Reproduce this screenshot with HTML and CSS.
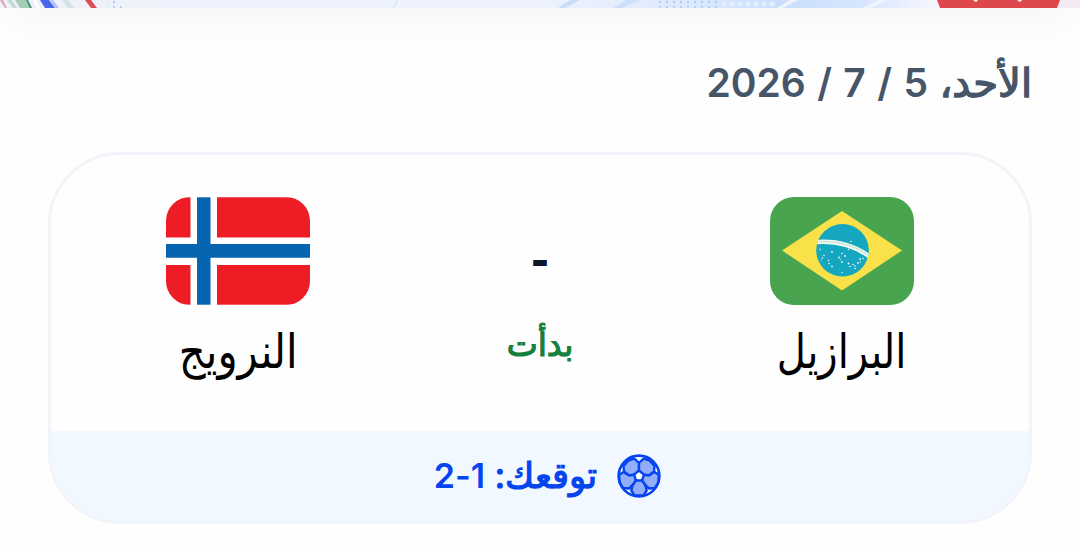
FILE: index.html
```
<!DOCTYPE html>
<html lang="ar" dir="rtl">
<head>
    <meta charset="UTF-8">
    <meta name="viewport" content="width=device-width, initial-scale=1.0">
    <title>المباريات</title>
    <link rel="stylesheet" href="styles.css">
</head>
<body>
    <!-- Banner -->
    <header class="banner">
        <svg class="banner-art" viewBox="0 0 1080 8" preserveAspectRatio="none">
            <defs>
                <linearGradient id="sky">
                    <stop offset="0" stop-color="#eef1fa"/>
                    <stop offset="0.5" stop-color="#eef3fd"/>
                    <stop offset="0.64" stop-color="#dce9fd"/>
                    <stop offset="0.72" stop-color="#c9defc"/>
                    <stop offset="0.8" stop-color="#d7e6fd"/>
                    <stop offset="0.86" stop-color="#f4f6fd"/>
                    <stop offset="1" stop-color="#f3eaf2"/>
                </linearGradient>
                <pattern id="dots" width="7" height="5" patternUnits="userSpaceOnUse">
                    <circle cx="2" cy="2" r="1.2" fill="#b6cdf0"/>
                </pattern>
                <pattern id="lightDots" width="8" height="7" patternUnits="userSpaceOnUse">
                    <circle cx="4" cy="4" r="2.6" fill="#e3eefe"/>
                </pattern>
            </defs>
            <rect width="1080" height="8" fill="url(#sky)"/>
            <path d="M0 0h3l4 8H5z" fill="#e5a9ad"/>
            <path d="M7 0h5l5 8h-4z" fill="#c3dccf"/>
            <path d="M15 0h11l5 8H20z" fill="#a3ccb8"/>
            <path d="M26 0h2l4 8h-2z" fill="#3f9269"/>
            <path d="M33 0h3l4 8h-3z" fill="#fff"/>
            <path d="M40 0h9l6 8H45z" fill="#4a67ea"/>
            <path d="M50 0h3l6 8h-4z" fill="#b5c2f5"/>
            <path d="M62 0h6l7 8h-7z" fill="#d5e3e6"/>
            <path d="M85 0h6l6 8h-6z" fill="#e04c56"/>
            <path d="M106 0h10l7 8h-10z" fill="url(#dots)"/>
            <path d="M397 0h1l-4 8h-1z" fill="#cfdcf2"/>
            <path d="M570 0h10l-15 8h-7z" fill="#c9ddf9"/>
            <path d="M626 0h14l-17 8h-10z" fill="#cddffa"/>
            <path d="M655 0h65v8h-65z" fill="url(#dots)"/>
            <path d="M720 0h55v8h-55z" fill="url(#lightDots)"/>
            <path d="M790 0h8l-15 8h-6zM880 0h8l-18 8h-8z" fill="#eff5fe"/>
            <path d="M937 0h123l-3 8H940z" fill="#de474c"/>
            <path d="M973 0h5l-2 2zM1017 0h5l-2 2z" fill="#fff"/>
        </svg>
    </header>

    <main class="content">
        <h1 class="date"><span class="day">الأحد،</span> 5 / 7 / 2026</h1>

        <!-- Match card -->
        <section class="match-card">
            <div class="match">
                <div class="team">
                    <svg class="flag" viewBox="0 0 144 108">
                        <clipPath id="globe"><circle cx="72.5" cy="53.3" r="26.3"/></clipPath>
                        <rect width="144" height="108" fill="#48a44f"/>
                        <path d="M12 53.5 72 14l60 39.5L72 93.5z" fill="#f8e149"/>
                        <circle cx="72.5" cy="53.3" r="26.3" fill="#15a6c0"/>
                        <g clip-path="url(#globe)">
                            <path d="M44 45.3Q76 42 101 60.5" fill="none" stroke="#f4fbf5" stroke-width="4.4"/>
                            <path d="M49 44.8Q76 43 97 57.5" fill="none" stroke="#a6d0b6" stroke-width="1.5" stroke-dasharray="1 .8"/>
                        </g>
                        <g fill="#e5f8fa">
                            <circle cx="50" cy="52.5" r=".8"/><circle cx="54" cy="58.5" r=".8"/>
                            <circle cx="52.5" cy="61" r=".8"/><circle cx="51" cy="63" r=".6"/>
                            <circle cx="62" cy="55" r=".9"/><circle cx="58.5" cy="63.5" r=".7"/>
                            <circle cx="59" cy="66.5" r=".8"/><circle cx="62" cy="69.5" r=".9"/>
                            <circle cx="72" cy="56.5" r=".8"/><circle cx="69" cy="60.5" r=".9"/>
                            <circle cx="75" cy="59" r=".9"/><circle cx="70.5" cy="62.5" r=".6"/>
                            <circle cx="72" cy="65" r=".9"/><circle cx="72" cy="75.5" r=".7"/>
                            <circle cx="81" cy="44.5" r=".8"/><circle cx="78.5" cy="52.5" r=".7"/>
                            <circle cx="78.5" cy="66.5" r=".9"/><circle cx="83" cy="67.5" r=".8"/>
                            <circle cx="80" cy="69.5" r=".8"/><circle cx="85" cy="69" r=".8"/>
                            <circle cx="85" cy="71.5" r=".8"/><circle cx="88" cy="66" r=".9"/>
                            <circle cx="90" cy="62" r=".9"/><circle cx="90.5" cy="65" r=".7"/>
                            <circle cx="93" cy="61.5" r=".8"/>
                        </g>
                    </svg>
                    <span class="team-name brazil">البرازيل</span>
                </div>

                <div class="score">
                    <span class="result">-</span>
                    <span class="status">بدأت</span>
                </div>

                <div class="team">
                    <svg class="flag" viewBox="0 0 144 108">
                        <rect width="144" height="108" fill="#ee1d25"/>
                        <path d="M24.5 0h26.5v108H24.5zM0 40.5h144V68H0z" fill="#fff"/>
                        <path d="M31 0h13.5v108H31zM0 47h144v13.7H0z" fill="#0565b1"/>
                        <path d="M0 .3h144M0 107.7h144" stroke="#fff" stroke-opacity=".5" stroke-width=".7"/>
                    </svg>
                    <span class="team-name norway">النرويج</span>
                </div>
            </div>

            <!-- Prediction -->
            <div class="prediction">
                <svg class="ball" viewBox="0 0 44 44">
                    <circle cx="22" cy="22" r="20.3" fill="#fff"/>
                    <g fill="#92aefb" stroke="#0544ee" stroke-width="2.4" stroke-linejoin="round">
                        <path d="M22 16.5V9l-4.5-4.3-6 1.8-5 5.5.5 5.5 5 4 5-.8z"/>
                        <path d="M22 16.5V9l4.5-4.3 6 1.8 5 5.5-.5 5.5-5 4-5-.8z"/>
                        <path d="M27 20.7l5 .8 5.5-3.5 4.5 3-.5 7-3.5 6-6 .5-3.8-3.5-3.2-4.5z"/>
                        <path d="M17 20.7l-5 .8L6.5 18 2 21l.5 7L6 34l6 .5 3.8-3.5 3.2-4.5z"/>
                        <path d="M19 26.5h6l3.2 4.5 1.5 5.5-3.2 5h-9l-3.2-5 1.5-5.5z"/>
                    </g>
                    <circle cx="22" cy="22" r="20.3" fill="none" stroke="#0544ee" stroke-width="2.7"/>
                </svg>
                <span class="prediction-text"><span class="label">توقعك:</span> 1-2</span>
            </div>
        </section>
    </main>
</body>
</html>
```
FILE: styles.css
```
* {
    margin: 0;
    padding: 0;
    box-sizing: border-box;
}

body {
    font-family: Inter, 'DejaVu Sans', sans-serif;
    background: #fefefe;
    color: #000;
    height: 549px;
    overflow: hidden;
}

/* Only the bottom edge of the banner is in view */
.banner {
    display: flex;
    align-items: flex-end;
    height: 208px;
    margin-top: -200px;
    box-shadow: 0 20px 40px -8px rgba(0, 0, 0, 0.035);
}

.banner-art {
    display: block;
    width: 100%;
    height: 8px;
}

.content {
    padding: 45px 48px 0;
}

.date {
    height: 99px;
    line-height: 60px;
    font-size: 39px;
    font-weight: 600;
    color: #475569;
    letter-spacing: -0.5px;
    word-spacing: 1.6px;
    white-space: nowrap;
}

.day {
    font-size: 40px;
    font-weight: 400;
    letter-spacing: 0;
    -webkit-text-stroke: 1.4px;
}

/* Match card */
.match-card {
    height: 372px;
    border: 3px solid #f1f5f9;
    border-radius: 72px;
    background: #fefefe;
    overflow: hidden;
}

.match {
    display: flex;
    justify-content: space-between;
    height: 276px;
    padding: 42px 40px 0;
}

.team {
    display: flex;
    flex-direction: column;
    align-items: center;
    width: 294px;
}

.flag {
    width: 144px;
    height: 108px;
    border-radius: 24px;
}

.team-name {
    margin-top: 14px;
    font-size: 48px;
    line-height: 64px;
    white-space: nowrap;
}

.brazil {
    transform: scaleX(0.835);
}

.norway {
    transform: scaleX(0.87);
}

.score {
    display: flex;
    flex-direction: column;
    align-items: center;
    padding-top: 34px;
}

.result {
    font-size: 40px;
    font-weight: 900;
    line-height: 60px;
    color: #0f172a;
}

.status {
    margin-top: 33px;
    font-size: 33px;
    line-height: 40px;
    color: #15803d;
    -webkit-text-stroke: 1.2px;
}

.prediction {
    display: flex;
    align-items: center;
    justify-content: center;
    gap: 20px;
    height: 90px;
    padding-left: 15px;
    background: #f1f8ff;
    color: #0544ee;
}

.ball {
    width: 44px;
    height: 44px;
}

.prediction-text {
    font-size: 34px;
    font-weight: 600;
    line-height: 50px;
    letter-spacing: -2.2px;
    word-spacing: 1px;
    white-space: nowrap;
}

.label {
    font-size: 35.5px;
    font-weight: 400;
    letter-spacing: 0;
    -webkit-text-stroke: 1.2px;
}
```
